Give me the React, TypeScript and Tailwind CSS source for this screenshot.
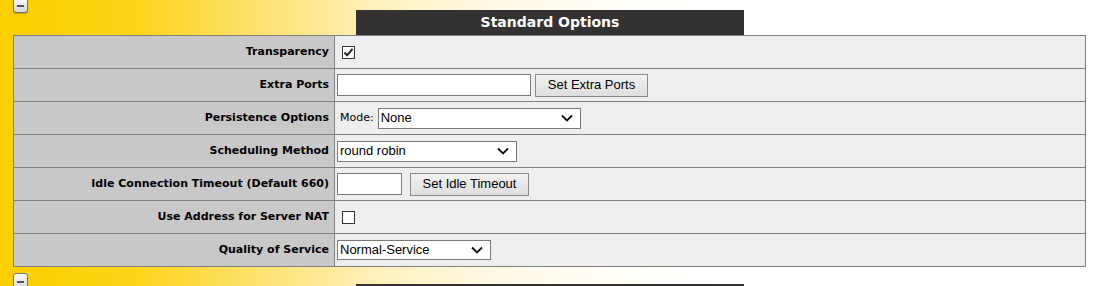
import React from "react";

const labelFont = { fontFamily: '"DejaVu Sans", Verdana, sans-serif' };
const ctrlFont = { fontFamily: '"Liberation Sans", Arial, sans-serif' };

function MinusButton() {
  return (
    <div className="w-[15px] h-[16px] rounded-[3px] border border-[#777] bg-gradient-to-b from-[#ffffff] to-[#d6d6d6] flex items-center justify-center shadow-[0_1px_1px_rgba(0,0,0,0.25)]">
      <div className="w-[7px] h-[2px] bg-[#555] mt-[1px]" />
    </div>
  );
}

function CheckBox({ checked }: { checked?: boolean }) {
  return (
    <div className="w-[13px] h-[13px] border border-[#333] bg-white flex items-center justify-center">
      {checked && (
        <svg width="11" height="11" viewBox="0 0 11 11">
          <path d="M1.5 5.5 L4.2 8.3 L9.5 1.8" stroke="#222" strokeWidth="2" fill="none" />
        </svg>
      )}
    </div>
  );
}

function Select({ value, width, height = 21 }: { value: string; width: number; height?: number }) {
  return (
    <div
      className="bg-white border border-[#7a7a7a] flex items-center justify-between pl-[2px] pr-[7px] text-[13px] text-black"
      style={{ ...ctrlFont, width, height }}
    >
      <span>{value}</span>
      <svg width="12" height="8" viewBox="0 0 12 8">
        <path d="M1 1.5 L6 6.5 L11 1.5" stroke="#111" strokeWidth="1.8" fill="none" />
      </svg>
    </div>
  );
}

function TextInput({ width }: { width: number }) {
  return <div className="bg-white border border-[#7a7a7a] h-[22px]" style={{ width }} />;
}

function Button({ label, width }: { label: string; width: number }) {
  return (
    <div
      className="h-[23px] border border-[#8a8a8a] bg-gradient-to-b from-[#f2f2f2] to-[#dedede] flex items-center justify-center text-[13px] text-black"
      style={{ ...ctrlFont, width }}
    >
      {label}
    </div>
  );
}

const rows: { label: string; content: React.ReactNode }[] = [
  {
    label: "Transparency",
    content: (
      <div className="pl-[5px] pt-[1px]">
        <CheckBox checked />
      </div>
    ),
  },
  {
    label: "Extra Ports",
    content: (
      <div className="flex items-center gap-[4px]">
        <TextInput width={194} />
        <Button label="Set Extra Ports" width={113} />
      </div>
    ),
  },
  {
    label: "Persistence Options",
    content: (
      <div className="flex items-center">
        <span className="text-[11px] text-black pl-[3px] pr-[4px]" style={labelFont}>
          Mode:
        </span>
        <Select value="None" width={203} />
      </div>
    ),
  },
  {
    label: "Scheduling Method",
    content: <Select value="round robin" width={180} />,
  },
  {
    label: "Idle Connection Timeout (Default 660)",
    content: (
      <div className="flex items-center gap-[8px]">
        <TextInput width={65} />
        <Button label="Set Idle Timeout" width={119} />
      </div>
    ),
  },
  {
    label: "Use Address for Server NAT",
    content: (
      <div className="pl-[5px]">
        <CheckBox />
      </div>
    ),
  },
  {
    label: "Quality of Service",
    content: <Select value="Normal-Service" width={154} height={20} />,
  },
];

export default function App() {
  return (
    <div className="w-[1106px] h-[286px] overflow-hidden bg-[linear-gradient(90deg,#fbcf00_0%,#fcd417_12%,#fde274_24%,#fff0bb_34%,#fff9e4_44%,#fffdf6_55%,#ffffff_65%)]">
      <div className="pl-[13px]">
        {/* header row */}
        <div className="flex items-start">
          <div className="-mt-[3px]">
            <MinusButton />
          </div>
          <div
            className="ml-[328px] mt-[10px] w-[388px] h-[25px] bg-[#333132] text-white font-bold text-[14px] flex items-center justify-center"
            style={labelFont}
          >
            Standard Options
          </div>
        </div>

        {/* options table */}
        <div className="w-[1073px] border border-[#7f7f7f]">
          {rows.map((r, i) => (
            <div
              key={r.label}
              className={`grid grid-cols-[321px_1fr] ${i > 0 ? "h-[33px] border-t border-[#7f7f7f]" : "h-[32px]"}`}
            >
              <div
                className="bg-[#c8c8c8] border-r border-[#7f7f7f] flex items-center justify-end pr-[5px] text-[11px] font-bold text-black"
                style={labelFont}
              >
                {r.label}
              </div>
              <div className="bg-[#eeeeee] flex items-center pl-[2px]">{r.content}</div>
            </div>
          ))}
        </div>

        {/* next section */}
        <div className="flex items-start mt-[6px]">
          <MinusButton />
          <div className="ml-[328px] mt-[11px] w-[388px] h-[25px] bg-[#333132]" />
        </div>
      </div>
    </div>
  );
}
